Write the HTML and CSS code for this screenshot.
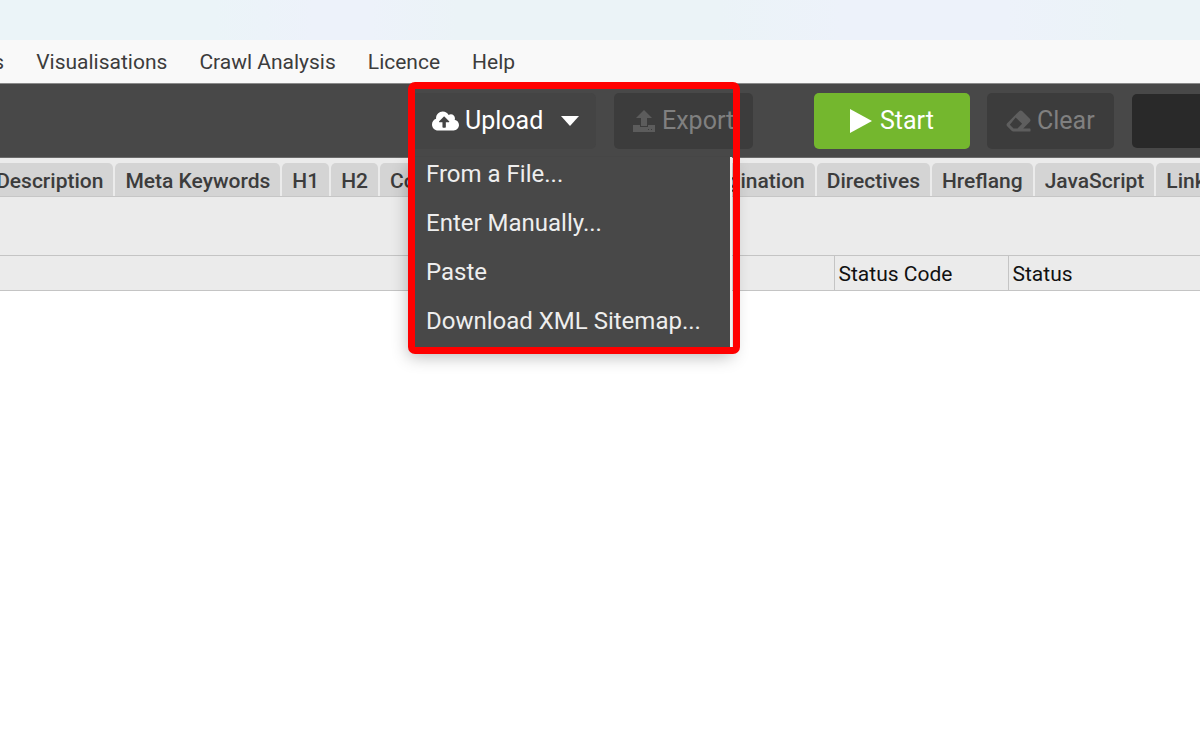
FILE: index.html
```html
<!DOCTYPE html>
<html lang="en">
<head>
<meta charset="utf-8">
<title>Upload menu</title>
<link rel="stylesheet" href="styles.css">
</head>
<body>
<div class="app">
  <div class="titlebar"></div>
  <nav class="menubar">
    <button class="menubar-item">Reports</button>
    <button class="menubar-item">Visualisations</button>
    <button class="menubar-item">Crawl Analysis</button>
    <button class="menubar-item">Licence</button>
    <button class="menubar-item">Help</button>
  </nav>
  <header class="toolbar">
    <div class="upload">
      <button class="btn btn-upload">
        <svg class="icon-cloud" viewBox="0 0 640 512"><path fill="currentColor" d="M537.600 226.600c4.100-10.700 6.400-22.400 6.400-34.600 0-53-43-96-96-96-19.700 0-38.100 6-53.300 16.200C367 64.200 315.300 32 256 32c-88.400 0-160 71.600-160 160 0 2.700.1 5.400.2 8.100C40.200 219.800 0 273.200 0 336c0 79.500 64.500 144 144 144h368c70.700 0 128-57.300 128-128 0-61.900-44-113.600-102.400-125.400zM393.400 288H328v112c0 8.800-7.200 16-16 16h-48c-8.800 0-16-7.200-16-16V288h-65.400c-14.300 0-21.400-17.200-11.300-27.300l105.400-105.400c6.200-6.200 16.400-6.200 22.600 0l105.400 105.400c10.100 10.100 2.900 27.300-11.300 27.300z"/></svg>
        <span>Upload</span>
        <svg class="icon-caret" viewBox="0 0 18 10"><path fill="currentColor" d="M0 0h18L9 10z"/></svg>
      </button>
      <div class="dropdown">
        <button class="dropdown-item">From a File...</button>
        <button class="dropdown-item">Enter Manually...</button>
        <button class="dropdown-item">Paste</button>
        <button class="dropdown-item">Download XML Sitemap...</button>
      </div>
      <div class="highlight"></div>
    </div>
    <button class="btn btn-export" disabled>
      <svg class="icon-export" viewBox="0 0 24 24"><path fill="currentColor" fill-rule="evenodd" d="M12 1l8 8h-5v8H9V9H4zM1 16h7v2h8v-2h7v7H1zM16 20v1h1v-1zM19 20v1h1v-1z"/></svg>
      <span>Export</span>
    </button>
    <button class="btn btn-start">
      <svg class="icon-play" viewBox="0 0 24 26"><path fill="currentColor" d="M1 1l22 12L1 25z"/></svg>
      <span>Start</span>
    </button>
    <button class="btn btn-clear" disabled>
      <svg class="icon-eraser" viewBox="0 0 512 512"><path fill="currentColor" d="M497.900 273.900c18.800-18.700 18.800-49.100 0-67.900l-160-160c-18.700-18.700-49.100-18.700-67.900 0l-256 256c-18.700 18.700-18.700 49.100 0 67.900l96 96A48 48 0 0 0 144 480h356c6.600 0 12-5.400 12-12v-40c0-6.600-5.400-12-12-12H355.900l142-142.100zM195.300 179.300l137.400 137.400L265.400 384l-32 32H150.600l-80-80z"/></svg>
      <span>Clear</span>
    </button>
    <div class="progress"></div>
  </header>
  <nav class="tabs">
    <button class="tab">Meta Description</button>
    <button class="tab">Meta Keywords</button>
    <button class="tab">H1</button>
    <button class="tab">H2</button>
    <button class="tab">Content</button>
    <button class="tab">Images</button>
    <button class="tab">Canonicals</button>
    <button class="tab">Pagination</button>
    <button class="tab">Directives</button>
    <button class="tab">Hreflang</button>
    <button class="tab">JavaScript</button>
    <button class="tab">Links</button>
  </nav>
  <div class="filterbar"></div>
  <table class="grid">
    <colgroup><col class="col-address"><col class="col-code"><col></colgroup>
    <thead><tr><th></th><th>Status Code</th><th>Status</th></tr></thead>
  </table>
</div>
</body>
</html>
```
FILE: styles.css
```css
* { box-sizing: border-box; }
body {
  margin: 0;
  background: #fff;
  font-family: Roboto, "Liberation Sans", sans-serif;
  font-size: 21px;
}
button {
  border: 0;
  padding: 0;
  background: none;
  font: inherit;
  color: inherit;
  white-space: nowrap;
}
svg { display: block; flex: none; }
.app { min-height: 100vh; overflow: hidden; }

.titlebar {
  height: 40px;
  background: linear-gradient(90deg, #ebf4f8 0%, #ebf4f8 18%, #edf2fa 26%, #edf2fa 31%, #ebf3f7 38%, #ebf3f7 60%, #edf2fa 70%, #edf2fa 84%, #ebf3f7 94%);
}
.menubar {
  display: flex;
  gap: 32px;
  height: 43px;
  margin-left: -69px;
  background: #f9f9f9;
  color: #3c3c3c;
}

.toolbar {
  display: flex;
  align-items: center;
  height: 75px;
  padding-left: 409px;
  background: #484848;
  border-top: 1px solid #8a8a8a;
  border-bottom: 1px solid #6a6a6a;
}
.btn {
  display: flex;
  align-items: center;
  flex: none;
  height: 56px;
  border-radius: 5px;
  font-size: 25px;
}
.upload { position: relative; flex: none; margin-right: 18px; }
.btn-upload {
  width: 187px;
  padding-left: 23px;
  background: #444;
  color: #fff;
}
.icon-cloud { width: 27px; height: 22px; margin-right: 6px; }
.icon-caret { width: 18px; height: 10px; margin-left: 18px; }
.btn-export {
  width: 139px;
  margin-right: 61px;
  padding-left: 18px;
  background: #3c3c3c;
  color: #808080;
}
.icon-export { width: 24px; height: 24px; margin-right: 6px; color: #5c5c5c; }
.btn-start {
  width: 156px;
  margin-right: 17px;
  padding-left: 35px;
  background: #74b72e;
  color: #fff;
}
.icon-play { width: 24px; height: 26px; margin-right: 7px; }
.btn-clear {
  width: 127px;
  margin-right: 18px;
  padding-left: 19px;
  background: #3c3c3c;
  color: #808080;
}
.icon-eraser { width: 25px; height: 24px; margin-right: 6px; color: #5e5e5e; }
.progress {
  flex: 1;
  height: 54px;
  border-radius: 5px 0 0 5px;
  background: #292929;
}

.dropdown {
  position: absolute;
  z-index: 2;
  top: 64px;
  left: 0;
  width: 323px;
  padding-bottom: 2px;
  border-right: 2px solid #f0f0f0;
  background: #484848;
  box-shadow: 0 8px 16px rgba(0, 0, 0, 0.3);
  clip-path: inset(0 -24px -32px -24px);
}
.dropdown-item {
  display: block;
  width: 100%;
  height: 49px;
  padding-left: 17px;
  text-align: left;
  font-size: 24px;
  color: #eee;
}
.dropdown-item:first-child { height: 42px; padding-bottom: 7px; }
.highlight {
  position: absolute;
  z-index: 3;
  top: -11px;
  left: -1px;
  width: 332px;
  height: 272px;
  border: 7px solid #f00;
  border-radius: 7px;
  pointer-events: none;
}

.tabs {
  display: flex;
  gap: 2px;
  height: 39px;
  margin-left: -67px;
  padding-top: 5px;
  background: #ebebeb;
  border-bottom: 1px solid #c6c6c6;
}
.tab {
  flex: none;
  padding: 2px 10px 0;
  border-radius: 5px 5px 0 0;
  background: #d4d4d4;
  color: #3c3c3c;
  font-weight: 500;
}
.filterbar { height: 58px; background: #ebebeb; }
.grid {
  width: 100%;
  table-layout: fixed;
  border-collapse: collapse;
  background: #ebebeb;
}
.col-address { width: 834px; }
.col-code { width: 174px; }
.grid th {
  height: 35px;
  padding: 2px 4px 0;
  border: 1px solid #c4c4c4;
  text-align: left;
  font-weight: 400;
  color: #111;
}
.grid th:first-child { border-left: 0; }
.grid th:last-child { border-right: 0; }
```
